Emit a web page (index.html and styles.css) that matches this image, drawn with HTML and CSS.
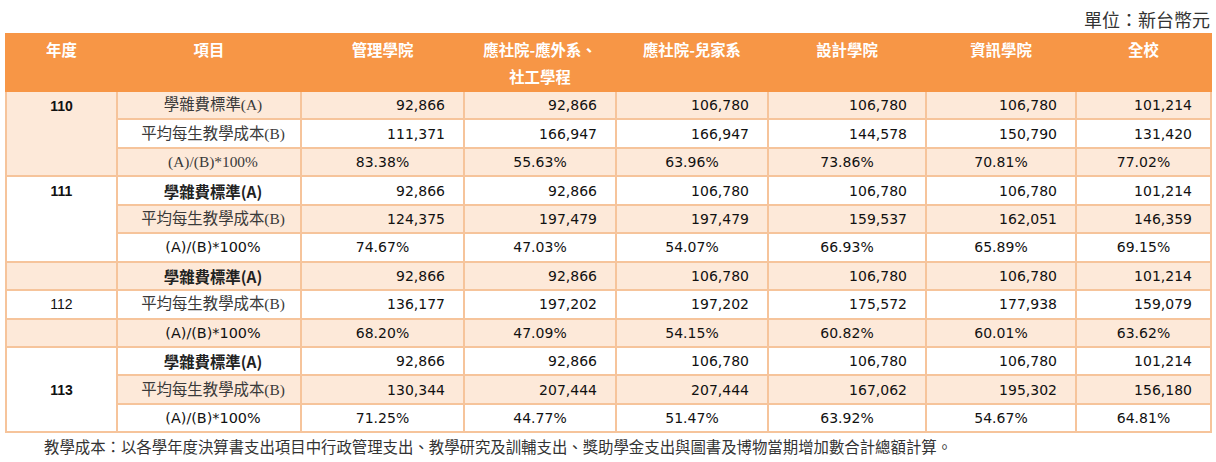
FILE: index.html
```html
<!DOCTYPE html>
<html lang="zh-Hant">
<head>
<meta charset="utf-8">
<title>學雜費標準與教學成本</title>
<link rel="stylesheet" href="styles.css">
</head>
<body>
<div class="page">
  <div class="unit">單位：新台幣元</div>
  <table class="cost">
    <colgroup>
      <col class="c-year"><col class="c-item"><col class="c-mgmt"><col class="c-soc1"><col class="c-soc2"><col class="c-des"><col class="c-info"><col class="c-all">
    </colgroup>
    <thead>
      <tr>
        <th>年度</th><th>項目</th><th>管理學院</th><th>應社院-應外系、<br>社工學程</th><th>應社院-兒家系</th><th>設計學院</th><th>資訊學院</th><th>全校</th>
      </tr>
    </thead>
    <tbody>
      <tr class="lt">
        <td class="year yb top lt" rowspan="3">110</td>
        <td class="item serif">學雜費標準(A)</td>
        <td class="num">92,866</td><td class="num">92,866</td><td class="num">106,780</td><td class="num">106,780</td><td class="num">106,780</td><td class="num">101,214</td>
      </tr>
      <tr class="wt">
        <td class="item serif">平均每生教學成本(B)</td>
        <td class="num">111,371</td><td class="num">166,947</td><td class="num">166,947</td><td class="num">144,578</td><td class="num">150,790</td><td class="num">131,420</td>
      </tr>
      <tr class="lt">
        <td class="item serif">(A)/(B)*100%</td>
        <td class="pct">83.38%</td><td class="pct">55.63%</td><td class="pct">63.96%</td><td class="pct">73.86%</td><td class="pct">70.81%</td><td class="pct">77.02%</td>
      </tr>

      <tr class="wt">
        <td class="year yb top wt" rowspan="3">111</td>
        <td class="item bold">學雜費標準(A)</td>
        <td class="num">92,866</td><td class="num">92,866</td><td class="num">106,780</td><td class="num">106,780</td><td class="num">106,780</td><td class="num">101,214</td>
      </tr>
      <tr class="lt">
        <td class="item serif">平均每生教學成本(B)</td>
        <td class="num">124,375</td><td class="num">197,479</td><td class="num">197,479</td><td class="num">159,537</td><td class="num">162,051</td><td class="num">146,359</td>
      </tr>
      <tr class="wt">
        <td class="item sans">(A)/(B)*100%</td>
        <td class="pct">74.67%</td><td class="pct">47.03%</td><td class="pct">54.07%</td><td class="pct">66.93%</td><td class="pct">65.89%</td><td class="pct">69.15%</td>
      </tr>

      <tr class="lt">
        <td class="year"></td>
        <td class="item bold">學雜費標準(A)</td>
        <td class="num">92,866</td><td class="num">92,866</td><td class="num">106,780</td><td class="num">106,780</td><td class="num">106,780</td><td class="num">101,214</td>
      </tr>
      <tr class="wt">
        <td class="year yn">112</td>
        <td class="item serif">平均每生教學成本(B)</td>
        <td class="num">136,177</td><td class="num">197,202</td><td class="num">197,202</td><td class="num">175,572</td><td class="num">177,938</td><td class="num">159,079</td>
      </tr>
      <tr class="lt">
        <td class="year"></td>
        <td class="item sans">(A)/(B)*100%</td>
        <td class="pct">68.20%</td><td class="pct">47.09%</td><td class="pct">54.15%</td><td class="pct">60.82%</td><td class="pct">60.01%</td><td class="pct">63.62%</td>
      </tr>

      <tr class="wt">
        <td class="year yb mid wt" rowspan="3">113</td>
        <td class="item bold">學雜費標準(A)</td>
        <td class="num">92,866</td><td class="num">92,866</td><td class="num">106,780</td><td class="num">106,780</td><td class="num">106,780</td><td class="num">101,214</td>
      </tr>
      <tr class="lt">
        <td class="item serif">平均每生教學成本(B)</td>
        <td class="num">130,344</td><td class="num">207,444</td><td class="num">207,444</td><td class="num">167,062</td><td class="num">195,302</td><td class="num">156,180</td>
      </tr>
      <tr class="wt">
        <td class="item sans">(A)/(B)*100%</td>
        <td class="pct">71.25%</td><td class="pct">44.77%</td><td class="pct">51.47%</td><td class="pct">63.92%</td><td class="pct">54.67%</td><td class="pct">64.81%</td>
      </tr>
    </tbody>
  </table>
  <p class="note">教學成本：以各學年度決算書支出項目中行政管理支出、教學研究及訓輔支出、獎助學金支出與圖書及博物當期增加數合計總額計算。</p>
</div>
</body>
</html>
```

FILE: styles.css
```css
html, body {
  margin: 0;
  padding: 0;
  background: #ffffff;
}

.page {
  width: 1216px;
  padding-left: 5px;
  box-sizing: border-box;
  font-family: "Noto Sans CJK TC", "Noto Sans", sans-serif;
  color: #222;
}

.unit {
  height: 33px;
  box-sizing: border-box;
  padding: 6px 6px 0 0;
  text-align: right;
  font-size: 18px;
  line-height: 26px;
  color: #333;
}

.cost {
  width: 1205px;
  table-layout: fixed;
  border-collapse: collapse;
}

.c-year { width: 111px; }
.c-item { width: 184px; }
.c-mgmt { width: 163px; }
.c-soc1 { width: 152px; }
.c-soc2 { width: 152px; }
.c-des  { width: 158px; }
.c-info { width: 150px; }
.c-all  { width: 135px; }

.cost th {
  height: 57px;
  box-sizing: border-box;
  padding: 1px 0 0;
  vertical-align: top;
  background: #f79646;
  border: 2px solid #f79646;
  color: #ffffff;
  font-weight: 700;
  font-size: 15.4px;
  line-height: 27px;
  text-align: center;
}

.cost td {
  height: 26.45px;
  padding: 0;
  border: 2px solid #f6c49b;
  font-size: 14px;
  line-height: 20px;
  color: #111;
  white-space: nowrap;
  overflow: hidden;
}

.cost tr.lt td { background: #fde9d9; }
.cost tr.wt td { background: #ffffff; }
.cost td.year.lt { background: #fde9d9; }
.cost td.year.wt { background: #ffffff; }

.year {
  text-align: center;
  vertical-align: middle;
}
.year.top { vertical-align: top; padding-top: 4px !important; }
.year.mid { vertical-align: middle; }
.yb {
  font-family: "Liberation Sans", Arial, sans-serif;
  font-weight: 700;
  font-size: 14px;
}
.yn {
  font-family: "Liberation Sans", Arial, sans-serif;
  font-size: 15px;
  color: #222;
}

.item {
  text-align: center;
  padding-left: 8px !important;
  color: #333;
}
.item.serif {
  font-family: "Liberation Serif", "Noto Sans CJK TC", serif;
  font-size: 15.4px;
  color: #3a3a3a;
}
.item.bold {
  font-family: "Noto Sans CJK TC", sans-serif;
  font-weight: 700;
  font-size: 15.4px;
  color: #222;
}
.item.sans {
  font-family: "DejaVu Sans", Verdana, sans-serif;
  font-size: 14.4px;
  color: #111;
}

.num {
  font-family: "DejaVu Sans", Verdana, sans-serif;
  text-align: right;
  padding-right: 18px !important;
}

.pct {
  font-family: "DejaVu Sans", Verdana, sans-serif;
  text-align: center;
}

.note {
  margin: 2px 0 0 39px;
  font-size: 15.4px;
  line-height: 22px;
  color: #333;
}
```
